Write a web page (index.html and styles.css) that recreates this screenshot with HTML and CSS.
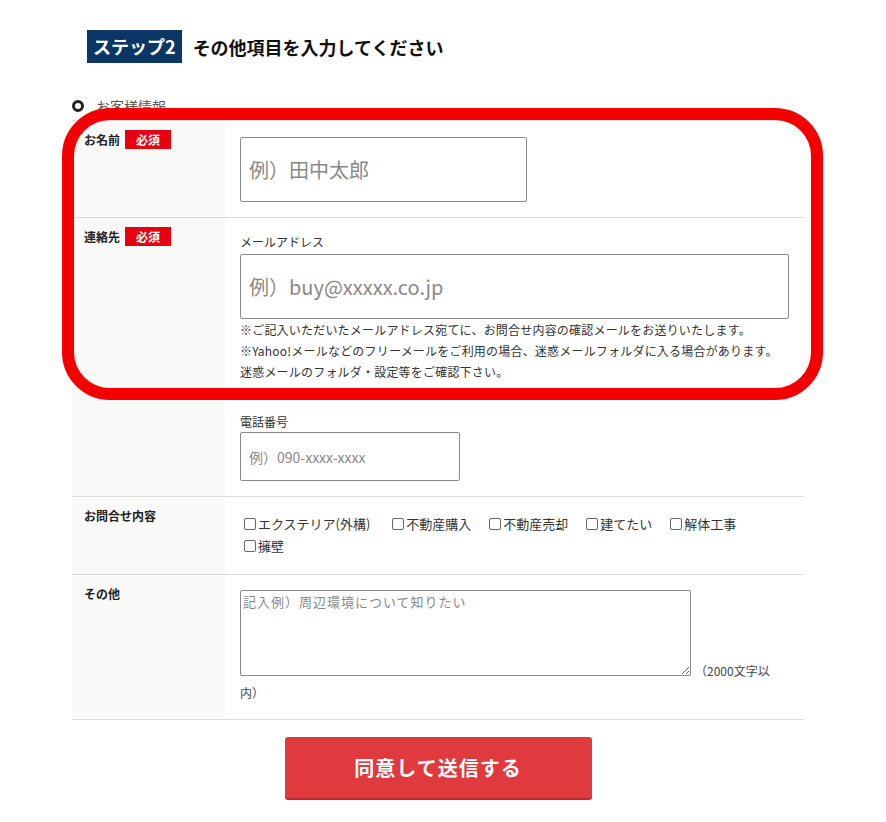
FILE: index.html
```html
<!DOCTYPE html>
<html lang="ja">
<head>
    <meta charset="UTF-8">
    <meta name="viewport" content="width=device-width, initial-scale=1.0">
    <title>お問合せフォーム ステップ2</title>
    <link rel="stylesheet" href="styles.css">
</head>
<body>
    <div class="form-wrap">
        <h2 class="step-title"><span class="step-badge">ステップ2</span>その他項目を入力してください</h2>

        <h3 class="section-title"><span class="bullet"></span>お客様情報</h3>

        <div class="form-table">
            <div class="form-row">
                <div class="form-label">お名前<span class="required">必須</span></div>
                <div class="form-field">
                    <input type="text" class="input-large input-name" placeholder="例）田中太郎">
                </div>
            </div>

            <div class="form-row">
                <div class="form-label">連絡先<span class="required">必須</span></div>
                <div class="form-field">
                    <div class="field-caption">メールアドレス</div>
                    <input type="text" class="input-large input-mail" placeholder="例）buy@xxxxx.co.jp">
                    <p class="field-note">
                        ※ご記入いただいたメールアドレス宛てに、お問合せ内容の確認メールをお送りいたします。<br>
                        ※Yahoo!メールなどのフリーメールをご利用の場合、迷惑メールフォルダに入る場合があります。<br>
                        迷惑メールのフォルダ・設定等をご確認下さい。
                    </p>
                    <div class="field-caption caption-tel">電話番号</div>
                    <input type="text" class="input-tel" placeholder="例）090-xxxx-xxxx">
                </div>
            </div>

            <div class="form-row">
                <div class="form-label">お問合せ内容</div>
                <div class="form-field field-checks">
                    <label class="check-item check-wide"><input type="checkbox">エクステリア(外構)</label>
                    <label class="check-item"><input type="checkbox">不動産購入</label>
                    <label class="check-item"><input type="checkbox">不動産売却</label>
                    <label class="check-item"><input type="checkbox">建てたい</label>
                    <label class="check-item"><input type="checkbox">解体工事</label>
                    <label class="check-item"><input type="checkbox">擁壁</label>
                </div>
            </div>

            <div class="form-row">
                <div class="form-label">その他</div>
                <div class="form-field field-other">
                    <textarea class="input-other" placeholder="記入例）周辺環境について知りたい"></textarea>（2000文字以<br>内）
                </div>
            </div>
        </div>

        <div class="submit-area">
            <button class="submit-btn" type="button">同意して送信する</button>
        </div>
    </div>

    <!-- 注目枠 -->
    <div class="highlight-frame"></div>
</body>
</html>
```

FILE: styles.css
```css
body {
    margin: 0;
    padding: 0;
    background: #fff;
    color: #222;
    font-family: "Noto Sans CJK JP", "Noto Sans", sans-serif;
}

.form-wrap {
    width: 732px;
    margin-left: 72px;
    padding-top: 30px;
}

.step-title {
    display: flex;
    align-items: center;
    margin: 0 0 0 15px;
    height: 33px;
    font-size: 18px;
    font-weight: bold;
    color: #111;
}

.step-badge {
    display: inline-block;
    height: 33px;
    line-height: 33px;
    padding: 0 6px;
    margin-right: 11px;
    background: #0b3665;
    color: #fff;
}

.section-title {
    display: flex;
    align-items: center;
    margin: 33px 0 4px 0;
    height: 20px;
    font-size: 14px;
    font-weight: normal;
    color: #555;
}

.bullet {
    width: 6px;
    height: 6px;
    border: 3px solid #222;
    border-radius: 50%;
    margin-right: 12px;
}

.form-table {
    border-top: 1px solid #ddd;
}

.form-row {
    display: grid;
    grid-template-columns: 153px 1fr;
    border-bottom: 1px solid #ddd;
}

.form-label {
    background: #f9f9f7;
    padding: 9px 12px;
    font-size: 12px;
    font-weight: bold;
    line-height: 19px;
}

.required {
    display: inline-block;
    width: 46px;
    height: 19px;
    line-height: 19px;
    margin-left: 5px;
    background: #e60012;
    color: #fff;
    text-align: center;
    font-size: 12px;
    font-weight: bold;
}

.form-field {
    padding: 15px 15px;
}

.input-large,
.input-tel,
.input-other {
    display: block;
    box-sizing: border-box;
    margin: 0;
    border: 1px solid #8a8a8a;
    border-radius: 2px;
    background: #fff;
    font-family: inherit;
    color: #333;
}

.input-large {
    height: 65px;
    padding: 0 8px;
    font-size: 20px;
}

.input-name {
    width: 287px;
    margin-top: 1px;
}

.input-mail {
    width: 549px;
    margin-top: 3px;
}

.input-tel {
    width: 220px;
    height: 49px;
    padding: 0 8px;
    margin-top: 1px;
    font-size: 14px;
}

.input-large::placeholder,
.input-tel::placeholder,
.input-other::placeholder {
    color: #888;
}

.field-caption {
    font-size: 12px;
    line-height: 18px;
    color: #333;
}

.caption-tel {
    margin-top: 31px;
}

.field-note {
    margin: 0;
    font-size: 12px;
    line-height: 21px;
    letter-spacing: 0.2px;
    color: #333;
}

.field-checks {
    padding: 16px 15px 17px 15px;
    font-size: 13px;
    line-height: 22px;
    color: #333;
}

.check-item {
    display: inline-block;
    margin-right: 11px;
    white-space: nowrap;
}

.check-wide {
    margin-right: 15px;
}

.check-item input {
    -webkit-appearance: none;
    appearance: none;
    box-sizing: border-box;
    width: 12px;
    height: 12px;
    margin: 0 2px 0 4px;
    vertical-align: -1px;
    border: 1px solid #666;
    border-radius: 2px;
    background: #fff;
}

.field-other {
    padding: 15px 15px 15px 15px;
    font-size: 12px;
    line-height: 22px;
    color: #444;
}

.input-other {
    display: inline-block;
    width: 451px;
    height: 86px;
    margin-right: 4px;
    padding: 2px 2px;
    resize: vertical;
    font-size: 13px;
    letter-spacing: 1px;
    line-height: 18px;
    vertical-align: baseline;
}

.submit-area {
    display: flex;
    justify-content: center;
    padding-top: 17px;
}

.submit-btn {
    width: 307px;
    height: 63px;
    border: none;
    border-bottom: 2px solid #c7262c;
    border-radius: 3px;
    background: #e0393e;
    color: #fff;
    font-family: inherit;
    font-size: 20px;
    font-weight: bold;
    letter-spacing: 1px;
    cursor: pointer;
}

/* 赤い注目枠（画面上に重ねる） */
.highlight-frame {
    position: absolute;
    left: 62px;
    top: 108px;
    width: 761px;
    height: 292px;
    box-sizing: border-box;
    border: 12px solid #f50000;
    border-radius: 48px;
    pointer-events: none;
}
```
